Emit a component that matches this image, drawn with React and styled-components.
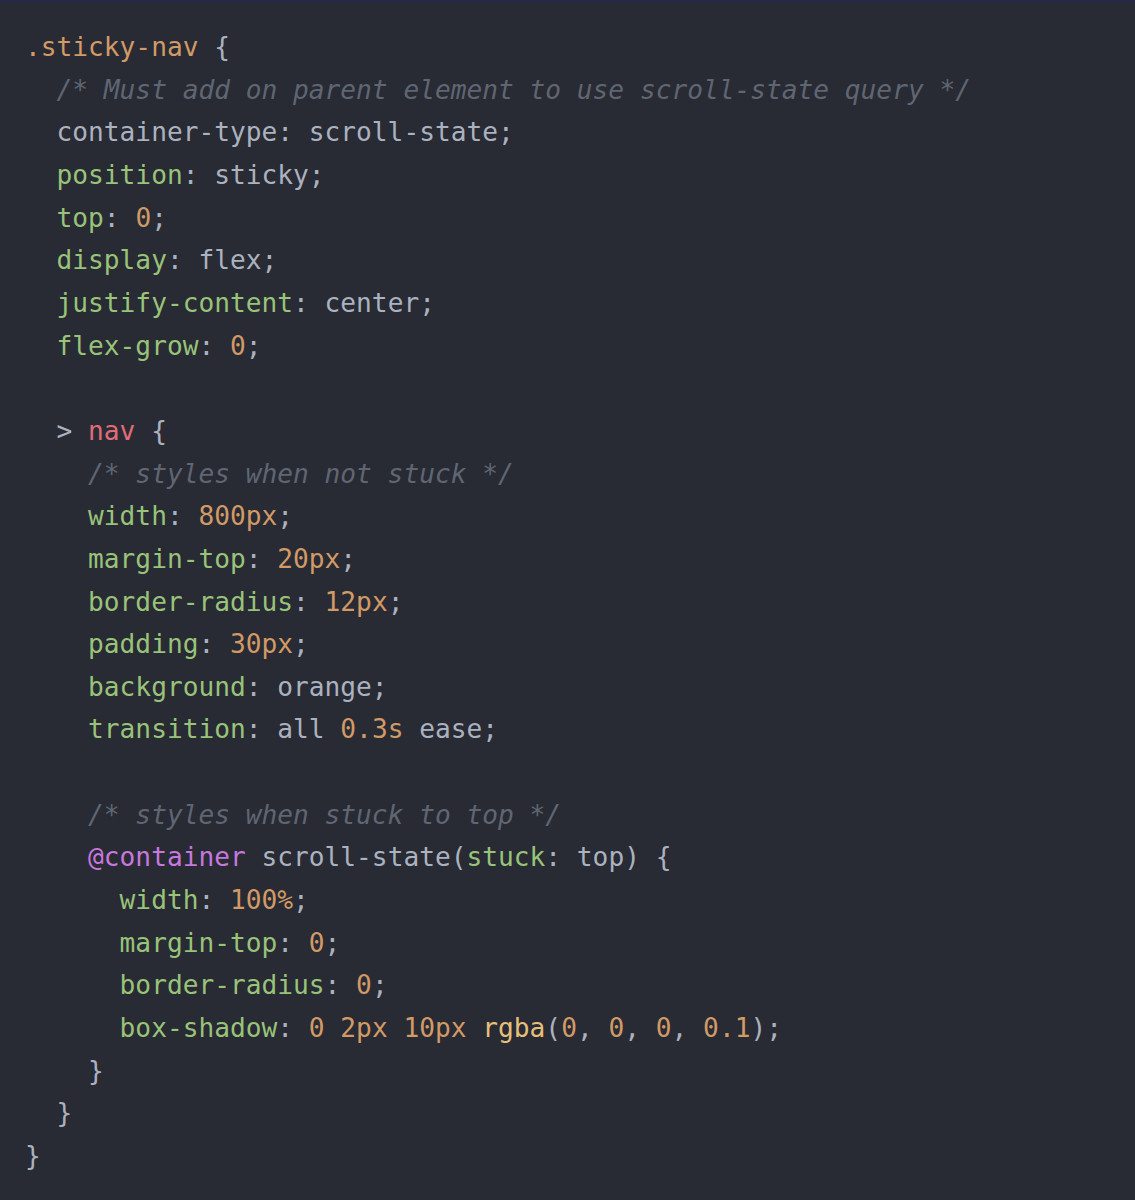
import React from 'react';
import styled, { createGlobalStyle } from 'styled-components';

const GlobalStyle = createGlobalStyle`
  html, body {
    margin: 0;
    padding: 0;
    background: #282a34;
  }
`;

const colors = {
  plain: '#abb2bf',
  sel: '#d19a66',
  num: '#d19a66',
  prop: '#98c379',
  tag: '#e06c75',
  at: '#c678dd',
  fn: '#e5c07b',
  comment: '#5f6672',
};

const Page = styled.div`
  min-height: 100vh;
  box-sizing: border-box;
  background: #282a34;
  border-top: 2px solid #242948;
  padding: 24px 25px;
`;

const Code = styled.pre`
  margin: 0;
  font-family: "DejaVu Sans Mono", "Liberation Mono", monospace;
  font-size: 26.2px;
  line-height: 42.65px;
  color: ${colors.plain};
`;

const Line = styled.div`
  padding-left: ${(p) => p.indent * 2}ch;
  min-height: 42.65px;
  white-space: pre;
`;

const Tok = styled.span`
  color: ${(p) => colors[p.kind] || colors.plain};
  font-style: ${(p) => (p.kind === 'comment' ? 'italic' : 'normal')};
`;

const lines = [
  [0, [['sel', '.sticky-nav'], ['plain', ' {']]],
  [1, [['comment', '/* Must add on parent element to use scroll-state query */']]],
  [1, [['plain', 'container-type: scroll-state;']]],
  [1, [['prop', 'position'], ['plain', ': sticky;']]],
  [1, [['prop', 'top'], ['plain', ': '], ['num', '0'], ['plain', ';']]],
  [1, [['prop', 'display'], ['plain', ': flex;']]],
  [1, [['prop', 'justify-content'], ['plain', ': center;']]],
  [1, [['prop', 'flex-grow'], ['plain', ': '], ['num', '0'], ['plain', ';']]],
  [0, []],
  [1, [['plain', '> '], ['tag', 'nav'], ['plain', ' {']]],
  [2, [['comment', '/* styles when not stuck */']]],
  [2, [['prop', 'width'], ['plain', ': '], ['num', '800px'], ['plain', ';']]],
  [2, [['prop', 'margin-top'], ['plain', ': '], ['num', '20px'], ['plain', ';']]],
  [2, [['prop', 'border-radius'], ['plain', ': '], ['num', '12px'], ['plain', ';']]],
  [2, [['prop', 'padding'], ['plain', ': '], ['num', '30px'], ['plain', ';']]],
  [2, [['prop', 'background'], ['plain', ': orange;']]],
  [2, [['prop', 'transition'], ['plain', ': all '], ['num', '0.3s'], ['plain', ' ease;']]],
  [0, []],
  [2, [['comment', '/* styles when stuck to top */']]],
  [2, [['at', '@container'], ['plain', ' scroll-state('], ['prop', 'stuck'], ['plain', ': top) {']]],
  [3, [['prop', 'width'], ['plain', ': '], ['num', '100%'], ['plain', ';']]],
  [3, [['prop', 'margin-top'], ['plain', ': '], ['num', '0'], ['plain', ';']]],
  [3, [['prop', 'border-radius'], ['plain', ': '], ['num', '0'], ['plain', ';']]],
  [3, [
    ['prop', 'box-shadow'], ['plain', ': '], ['num', '0 2px 10px'], ['plain', ' '],
    ['fn', 'rgba'], ['plain', '('], ['num', '0'], ['plain', ', '], ['num', '0'], ['plain', ', '],
    ['num', '0'], ['plain', ', '], ['num', '0.1'], ['plain', ');'],
  ]],
  [2, [['plain', '}']]],
  [1, [['plain', '}']]],
  [0, [['plain', '}']]],
];

export default function App() {
  return (
    <>
      <GlobalStyle />
      <Page>
        <Code>
          {lines.map(([indent, toks], i) => (
            <Line key={i} indent={indent}>
              {toks.map(([kind, text], j) => (
                <Tok key={j} kind={kind}>{text}</Tok>
              ))}
            </Line>
          ))}
        </Code>
      </Page>
    </>
  );
}
